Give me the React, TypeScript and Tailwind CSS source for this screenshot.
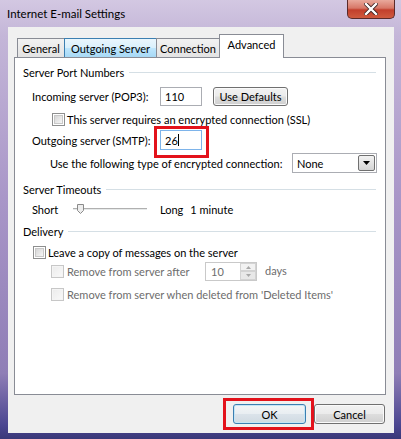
import React from 'react';

function Checkbox({ disabled }: { disabled?: boolean }) {
  return (
    <div
      className={
        disabled
          ? 'shrink-0 w-[13px] h-[13px] border border-[#c7c7c7] bg-[#f4f4f4] flex items-center justify-center'
          : 'shrink-0 w-[13px] h-[13px] border border-[#8e8f8f] bg-white flex items-center justify-center'
      }
    >
      <div
        className={
          disabled
            ? 'w-[9px] h-[9px] bg-[linear-gradient(135deg,#ececec,#f8f8f8)]'
            : 'w-[9px] h-[9px] border border-[#c8c8c8] bg-[linear-gradient(135deg,#d6d6d6,#f6f6f6)]'
        }
      />
    </div>
  );
}

function GroupHeader({ title }: { title: string }) {
  return (
    <div className="flex items-center h-[16px] pl-[8px] pr-[9px]">
      <span className="text-black">{title}</span>
      <div className="flex-1 h-px bg-[#d5dfe5] ml-[5px]" />
    </div>
  );
}

function Button({ label, isDefault }: { label: string; isDefault?: boolean }) {
  return (
    <div
      className={
        isDefault
          ? 'h-[20px] w-[73px] rounded-[3px] border border-[#3c7fb1] shadow-[inset_0_0_0_1px_#c4e5f6] bg-[linear-gradient(to_bottom,#f2f5f7_0%,#e9eef2_48%,#dbe3ea_52%,#d0dae2_100%)] flex items-center justify-center text-black'
          : 'h-[20px] w-[71px] rounded-[3px] border border-[#707070] shadow-[inset_0_0_0_1px_#fafafa] bg-[linear-gradient(to_bottom,#f2f2f2_0%,#ebebeb_48%,#dddddd_52%,#cfcfcf_100%)] flex items-center justify-center text-black'
      }
    >
      {label}
    </div>
  );
}

export default function App() {
  return (
    <div className="relative w-[401px] h-[439px] overflow-hidden flex flex-col whitespace-nowrap font-['Lato','Noto_Sans',sans-serif] text-[11px] leading-none bg-[linear-gradient(to_bottom,#d3c8e2_0%,#c4b6d8_8%,#a996c8_45%,#8f7eb6_85%,#4a4590_97%,#3a3878_100%)]">
      {/* Title bar */}
      <div className="h-[27px] flex items-center pl-[7px] text-black text-[11.5px]">Internet E-mail Settings</div>

      {/* Close button */}
      <div className="absolute left-[347px] top-0 w-[48px] h-[19px] rounded-b-[5px] border border-t-0 border-[#5a2a2a] bg-[linear-gradient(to_bottom,#e9a99c_0%,#d77767_45%,#c23f2c_55%,#cf5a3f_100%)] flex items-center justify-center">
        <svg width="14" height="12" viewBox="0 0 14 12">
          <path d="M2 1 L12 11 M12 1 L2 11" stroke="#3a2020" strokeWidth="4" strokeLinecap="square" />
          <path d="M2 1 L12 11 M12 1 L2 11" stroke="#ffffff" strokeWidth="2.4" strokeLinecap="square" />
        </svg>
      </div>

      {/* Client area */}
      <div className="ml-[8px] mr-[7px] h-[406px] bg-[#f0f0f0] flex flex-col px-[6px] pt-[7px]">
        {/* Tabs */}
        <div className="h-[23px] flex items-end pl-[3px]">
          <div className="h-[19px] w-[48px] border border-b-0 border-[#898c95] bg-[linear-gradient(to_bottom,#f2f2f2,#e3e3e3)] flex items-center justify-center text-black">
            General
          </div>
          <div className="-ml-px h-[19px] w-[93px] border border-b-0 border-[#3c7fb1] bg-[linear-gradient(to_bottom,#eaf6fd,#d9f0fc_50%,#bee6fd_51%,#a7d9f5)] flex items-center justify-center text-black">
            Outgoing Server
          </div>
          <div className="-ml-px h-[19px] w-[64px] border border-b-0 border-[#898c95] bg-[linear-gradient(to_bottom,#f2f2f2,#e3e3e3)] flex items-center justify-center text-black">
            Connection
          </div>
          <div className="-ml-px relative z-10 -mb-px h-[24px] w-[65px] border border-b-0 border-[#898c95] bg-white flex items-start pt-[4px] justify-center text-black">
            Advanced
          </div>
        </div>

        {/* Panel */}
        <div className="relative w-[372px] h-[338px] border border-[#898c95] bg-white flex flex-col pt-[6px]">
          <GroupHeader title="Server Port Numbers" />

          <div className="mt-[7px] h-[19px] flex items-center pl-[17px]">
            <span className="w-[128px] shrink-0">Incoming server (POP3):</span>
            <div className="shrink-0 w-[42px] h-[19px] border border-[#abadb3] bg-white flex items-center pl-[4px]">110</div>
            <div className="shrink-0 ml-[11px] w-[75px] h-[19px] rounded-[3px] border border-[#707070] shadow-[inset_0_0_0_1px_#fafafa] bg-[linear-gradient(to_bottom,#f2f2f2_0%,#ebebeb_48%,#dddddd_52%,#cfcfcf_100%)] flex items-center justify-center">
              Use Defaults
            </div>
          </div>

          <div className="mt-[5px] h-[16px] flex items-center pl-[37px]">
            <Checkbox />
            <span className="ml-[2px]">This server requires an encrypted connection (SSL)</span>
          </div>

          <div className="mt-[3px] h-[20px] flex items-center pl-[17px]">
            <span className="w-[128px] shrink-0">Outgoing server (SMTP):</span>
            <div className="relative shrink-0 w-[42px] h-[20px] border border-[#7eb4ea] bg-white flex items-center pl-[4px]">
              26<span className="w-px h-[12px] bg-black" />
              <div className="absolute -left-[7px] -top-[5px] w-[55px] h-[32px] border-[3px] border-[#e3121b]" />
            </div>
          </div>

          <div className="mt-[3px] h-[20px] flex items-center pl-[35px]">
            <span className="w-[242px] shrink-0">Use the following type of encrypted connection:</span>
            <div className="shrink-0 w-[85px] h-[20px] border border-[#abadb3] bg-white flex items-center pl-[4px]">
              <span className="flex-1">None</span>
              <div className="w-[17px] h-[16px] mr-px border border-[#707070] rounded-[2px] bg-[linear-gradient(to_bottom,#f2f2f2,#d4d4d4)] flex items-center justify-center">
                <svg width="7" height="4" viewBox="0 0 7 4">
                  <path d="M0 0 L7 0 L3.5 4 Z" fill="#000" />
                </svg>
              </div>
            </div>
          </div>

          <div className="mt-[8px]">
            <GroupHeader title="Server Timeouts" />
          </div>

          <div className="mt-[4px] h-[16px] flex items-center pl-[17px]">
            <span className="w-[41px] shrink-0">Short</span>
            <div className="relative shrink-0 w-[74px] h-[16px] flex items-center">
              <div className="w-full h-[3px] border-t border-[#b0b0b0] border-b border-b-white bg-[#e7eaea]" />
              <svg className="absolute left-[4px] top-[3px]" width="7" height="10" viewBox="0 0 7 10">
                <path d="M0.5 0.5 H6.5 V6.5 L3.5 9.5 L0.5 6.5 Z" fill="#ededed" stroke="#8a8a8a" />
              </svg>
            </div>
            <span className="ml-[13px]">Long</span>
            <span className="ml-[7px]">1 minute</span>
          </div>

          <div className="mt-[6px]">
            <GroupHeader title="Delivery" />
          </div>

          <div className="mt-[5px] h-[16px] flex items-center pl-[18px]">
            <Checkbox />
            <span className="ml-[2px]">Leave a copy of messages on the server</span>
          </div>

          <div className="mt-[2px] h-[19px] flex items-center pl-[36px] text-[#6d6d6d]">
            <Checkbox disabled />
            <span className="ml-[3px] w-[138px] shrink-0">Remove from server after</span>
            <div className="shrink-0 w-[52px] h-[19px] border border-[#c9c9c9] bg-white flex items-center pl-[5px]">
              <span className="flex-1">10</span>
              <div className="w-[16px] h-[17px] flex flex-col">
                <div className="h-[8px] border border-[#d3d3d3] bg-[#f2f2f2] flex items-center justify-center">
                  <svg width="5" height="3" viewBox="0 0 5 3"><path d="M0 3 L2.5 0 L5 3 Z" fill="#a8a8a8" /></svg>
                </div>
                <div className="h-[9px] border border-[#d3d3d3] bg-[#e8e8e8] flex items-center justify-center">
                  <svg width="5" height="3" viewBox="0 0 5 3"><path d="M0 0 L5 0 L2.5 3 Z" fill="#a8a8a8" /></svg>
                </div>
              </div>
            </div>
            <span className="ml-[8px] -mt-[3px]">days</span>
          </div>

          <div className="mt-[5px] h-[16px] flex items-center pl-[36px] text-[#6d6d6d]">
            <Checkbox disabled />
            <span className="ml-[3px]">Remove from server when deleted from 'Deleted Items'</span>
          </div>
        </div>

        {/* Buttons */}
        <div className="mt-[9px] flex justify-end pr-[3px] gap-[8px]">
          <div className="relative">
            <Button label="OK" isDefault />
            <div className="absolute -left-[10px] -top-[6px] w-[91px] h-[32px] border-[3px] border-[#e3121b]" />
          </div>
          <Button label="Cancel" />
        </div>
      </div>
    </div>
  );
}
